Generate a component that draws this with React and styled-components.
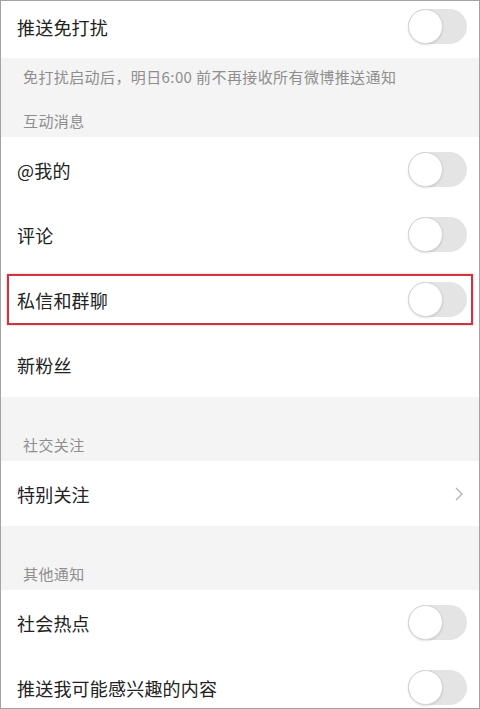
import React from 'react';
import styled, { createGlobalStyle } from 'styled-components';

const GlobalStyle = createGlobalStyle`
  html, body {
    margin: 0;
    padding: 0;
    background: #ffffff;
  }
  * {
    box-sizing: border-box;
  }
`;

const Frame = styled.div`
  width: 480px;
  height: 709px;
  border: 1px solid #a3a3a3;
  background: #ffffff;
  overflow: hidden;
  display: flex;
  flex-direction: column;
  font-family: "Noto Sans CJK SC", "Noto Sans", sans-serif;
`;

const Row = styled.div`
  position: relative;
  flex-shrink: 0;
  height: ${(p) => p.$height || 65}px;
  padding: 0 12px ${(p) => p.$bottomPad || 0}px 16px;
  display: flex;
  align-items: center;
  justify-content: space-between;
  background: #ffffff;

  ${(p) =>
    p.$highlight &&
    `
    &::after {
      content: '';
      position: absolute;
      top: 7px;
      bottom: 7px;
      left: 6px;
      right: 6px;
      border: 2px solid #cc3440;
      box-shadow: 0 0 2px rgba(204, 52, 64, 0.45);
      pointer-events: none;
    }
  `}
`;

const Label = styled.span`
  font-size: 18px;
  line-height: 24px;
  color: #222222;
  letter-spacing: 0.2px;
`;

const Section = styled.div`
  flex-shrink: 0;
  height: ${(p) => p.$height || 64}px;
  background: #f4f4f4;
  padding: ${(p) => p.$top || 0}px 16px 6px 22px;
  display: flex;
  flex-direction: column;
  justify-content: ${(p) => (p.$top ? 'space-between' : 'flex-end')};
`;

const Hint = styled.span`
  font-size: 15px;
  line-height: 20px;
  color: #8e8e8e;
  letter-spacing: 0.4px;
`;

const Track = styled.div`
  width: 59px;
  height: 35px;
  border-radius: 18px;
  background: #e4e4e4;
  position: relative;
  flex-shrink: 0;
`;

const Knob = styled.div`
  position: absolute;
  left: 0;
  top: 0;
  width: 35px;
  height: 35px;
  border-radius: 50%;
  background: #ffffff;
  border: 1px solid #d4d4d4;
  box-shadow: 0 1px 2px rgba(0, 0, 0, 0.12);
`;

const Chevron = styled.svg`
  width: 10px;
  height: 14px;
  margin-right: 3px;
  flex-shrink: 0;
`;

function Toggle() {
  return (
    <Track>
      <Knob />
    </Track>
  );
}

function SwitchRow({ label, ...rest }) {
  return (
    <Row {...rest}>
      <Label>{label}</Label>
      <Toggle />
    </Row>
  );
}

export default function App() {
  return (
    <>
      <GlobalStyle />
      <Frame>
        <SwitchRow label="推送免打扰" $height={57} $bottomPad={6} />
        <Section $height={79} $top={9}>
          <Hint>免打扰启动后，明日6:00 前不再接收所有微博推送通知</Hint>
          <Hint>互动消息</Hint>
        </Section>
        <SwitchRow label="@我的" />
        <SwitchRow label="评论" />
        <SwitchRow label="私信和群聊" $highlight />
        <Row>
          <Label>新粉丝</Label>
        </Row>
        <Section>
          <Hint>社交关注</Hint>
        </Section>
        <Row>
          <Label>特别关注</Label>
          <Chevron viewBox="0 0 10 14">
            <polyline points="2,1 8,7 2,13" fill="none" stroke="#b5b5b5" strokeWidth="1.4" />
          </Chevron>
        </Row>
        <Section>
          <Hint>其他通知</Hint>
        </Section>
        <SwitchRow label="社会热点" />
        <SwitchRow label="推送我可能感兴趣的内容" />
      </Frame>
    </>
  );
}
